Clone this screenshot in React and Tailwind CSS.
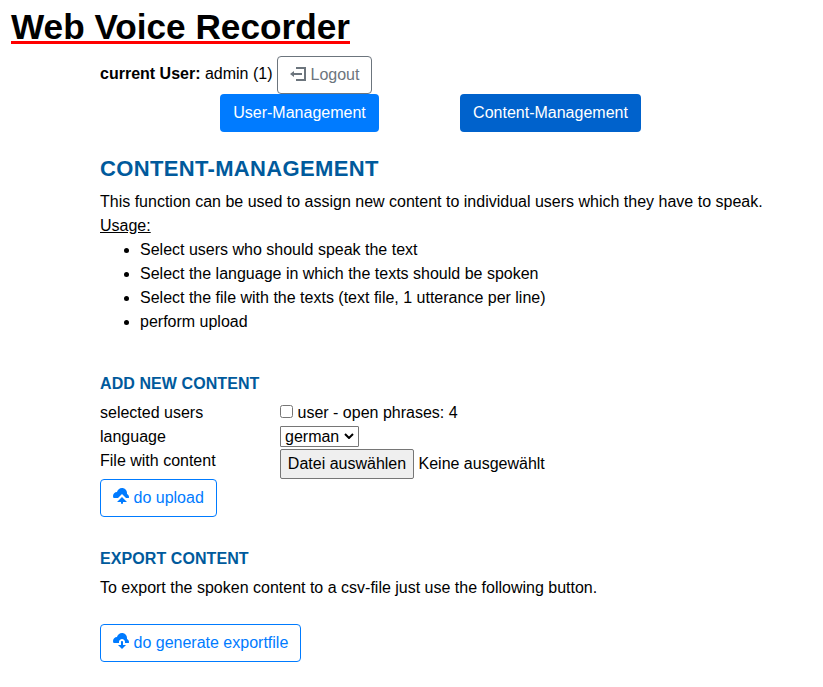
import React from 'react';

const LOGOUT =
  'M3 0v1h4v5h-4v1h5v-7h-5zm-1 2l-2 1.5 2 1.5v-1h4v-1h-4v-1z';
const CLOUD_UPLOAD =
  'M4.5 0c-1.21 0-2.27.86-2.5 2-1.1 0-2 .9-2 2 0 .37.11.71.28 1h2.22l2-2 2 2h1.41c.06-.16.09-.33.09-.5 0-.65-.42-1.29-1-1.5v-.5c0-1.38-1.12-2.5-2.5-2.5zm0 4.5l-2.5 2.5h2v.5a.5.5 0 1 0 1 0v-.5h2l-2.5-2.5z';
const CLOUD_DOWNLOAD =
  'M4.5 0c-1.21 0-2.27.86-2.5 2-1.1 0-2 .9-2 2 0 .37.11.71.28 1h2.72v-.5c0-.83.67-1.5 1.5-1.5s1.5.67 1.5 1.5v.5h1.91c.06-.16.09-.33.09-.5 0-.65-.42-1.29-1-1.5v-.5c0-1.38-1.12-2.5-2.5-2.5zm-.16 4a.5.5 0 0 0-.34.5v1.5h-1.5l2 2 2-2h-1.5v-1.5a.5.5 0 0 0-.59-.5.5.5 0 0 0-.06 0 .5.5 0 0 0-.09 0z';

function Icon({ d, className }) {
  return (
    <svg viewBox="0 0 8 8" className={`mr-[4.5px] h-4 w-4 shrink-0 fill-current ${className}`} aria-hidden="true">
      <path d={d} />
    </svg>
  );
}

function OutlineButton({ icon, iconClass = '', className, children }) {
  return (
    <button
      className={`flex h-[38px] items-center whitespace-nowrap rounded border pl-3 leading-6 ${className}`}
    >
      <Icon d={icon} className={iconClass} />
      {children}
    </button>
  );
}

function SubHeading({ children }) {
  return (
    <h3 className="text-[16px] font-bold leading-[19px] tracking-[0.08px] text-[#005a9c]">
      {children}
    </h3>
  );
}

export default function App() {
  return (
    <div className="h-[687px] overflow-hidden bg-white font-['Liberation_Sans',Arial,sans-serif] text-[16px] leading-6 text-black">
      <header className="flex h-14 pl-[11px]">
        <h1 className="mt-2 h-9 w-[339px] whitespace-nowrap border-b-[3px] border-[#ff0000] text-[35.2px] font-bold leading-[38px]">
          Web Voice Recorder
        </h1>
      </header>

      <div className="pl-[100px]">
        <div className="flex h-[38px]">
          <p className="mt-[6px] w-[177px] whitespace-nowrap">
            <b>current User:</b> admin (1)
          </p>
          <OutlineButton icon={LOGOUT} className="w-[95px] border-[#6c757d] text-[#6c757d]">
            Logout
          </OutlineButton>
        </div>

        <nav className="flex gap-[81px] pl-[120px]">
          <button className="h-[38px] w-[159px] rounded bg-[#007bff] leading-6 text-white">
            User-Management
          </button>
          <button className="h-[38px] w-[181px] rounded bg-[#0062cc] leading-6 text-white">
            Content-Management
          </button>
        </nav>

        <section className="mt-[22px]">
          <h2 className="whitespace-nowrap text-[22px] font-bold leading-[30px] tracking-[0.34px] text-[#005a9c]">
            CONTENT-MANAGEMENT
          </h2>
          <p className="mt-1.5 whitespace-nowrap">
            This function can be used to assign new content to individual users which they have to
            speak.
          </p>
          <p className="underline">Usage:</p>
          <ul className="list-disc pl-10">
            <li>Select users who should speak the text</li>
            <li>Select the language in which the texts should be spoken</li>
            <li>Select the file with the texts (text file, 1 utterance per line)</li>
            <li>perform upload</li>
          </ul>
        </section>

        <section className="mt-10">
          <SubHeading>ADD NEW CONTENT</SubHeading>
          <div className="mt-2 grid grid-cols-[180px_1fr]">
            <span className="h-6">selected users</span>
            <label className="flex h-6 items-start">
              <input
                type="checkbox"
                className="mr-[4.5px] mt-1 h-[13px] w-[13px] appearance-none rounded-[2.5px] border border-[#767676] bg-white"
              />
              user - open phrases: 4
            </label>
            <span className="h-6">language</span>
            <div className="flex h-6 pt-px">
              <button className="flex h-[21px] w-[79px] items-center justify-between rounded-[1px] border border-[#767676] pl-1 pr-1 leading-5">
                german
                <svg viewBox="0 0 10 6" className="mb-px h-[6px] w-[10px]" fill="none" aria-hidden="true">
                  <path d="M1 1l4 4 4-4" stroke="#000" strokeWidth="2" />
                </svg>
              </button>
            </div>
            <span className="h-[30px]">File with content</span>
            <div className="flex h-[30px] items-start">
              <button className="h-[30px] w-[134px] whitespace-nowrap rounded-[2px] border border-[#767676] bg-[#efefef]">
                Datei auswählen
              </button>
              <span className="ml-[4.5px] mt-[3px]">Keine ausgewählt</span>
            </div>
          </div>
          <OutlineButton
            icon={CLOUD_UPLOAD}
            iconClass="mb-1"
            className="w-[117px] border-[#007bff] text-[#007bff]"
          >
            do upload
          </OutlineButton>
        </section>

        <section className="mt-8">
          <SubHeading>EXPORT CONTENT</SubHeading>
          <p className="mb-6 mt-2">
            To export the spoken content to a csv-file just use the following button.
          </p>
          <OutlineButton
            icon={CLOUD_DOWNLOAD}
            iconClass="mb-1"
            className="w-[201px] border-[#007bff] text-[#007bff]"
          >
            do generate exportfile
          </OutlineButton>
        </section>
      </div>
    </div>
  );
}
